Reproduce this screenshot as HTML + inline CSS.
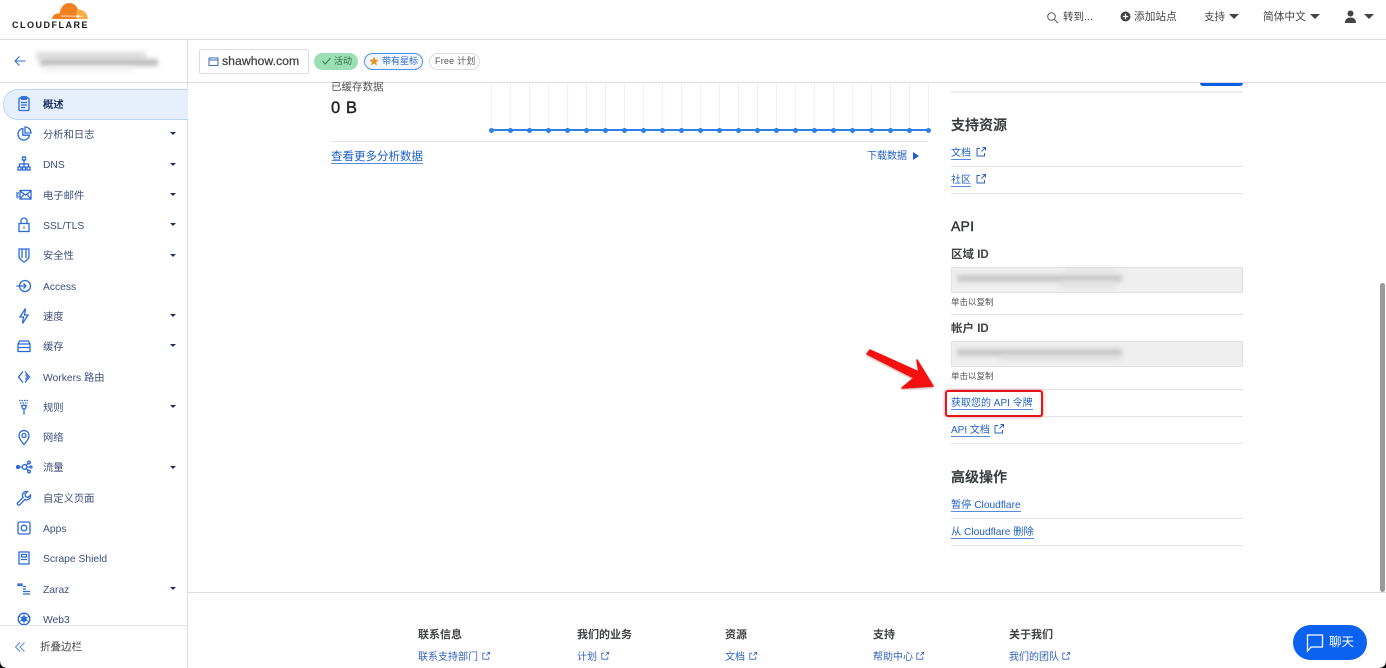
<!DOCTYPE html>
<html lang="zh-CN"><head><meta charset="utf-8"><title>Cloudflare</title>
<style>
html,body{margin:0;padding:0;background:#fff}
#p{position:relative;width:1386px;height:668px;overflow:hidden;background:#fff;font-family:"Liberation Sans","Noto Sans CJK SC",sans-serif;color:#36393a;filter:blur(.35px)}
#p div,#p a,#p svg{position:absolute}
.t{white-space:nowrap;line-height:14px}
.hr{height:1px;background:#e3e3e3}
.s{left:43px;font-size:10.3px;color:#3d4f7c;white-space:nowrap;line-height:14px;margin-top:2px}
.c{left:170px;width:0;height:0;border-left:3.5px solid transparent;border-right:3.5px solid transparent;border-top:3.5px solid #1d3261}
.i{left:15px;width:18px;height:18px;fill:none;stroke:#2c6ad6;stroke-width:1.3}
.l{color:#1f5fc9;font-size:10px;white-space:nowrap;line-height:10px;border-bottom:1px solid #5a8ad8}
.f{color:#2f62c0;font-size:10px;white-space:nowrap;line-height:13px}
.h{font-size:14px;font-weight:500;color:#36393a;white-space:nowrap;line-height:18px;-webkit-text-stroke:.3px #36393a}
.fh{font-size:11px;font-weight:700;color:#404243;white-space:nowrap;line-height:14px}
.x{width:9px;height:9px;fill:none;stroke:#2f62c0;stroke-width:1}
.v{top:84px;width:1px;height:46px;background:#e9f0fb}
.d{top:127.5px;width:5px;height:5px;border-radius:50%;background:#2f7fe8}
.bl{background:#c9c9c9;filter:blur(2.5px)}
</style></head><body><div id="p">

<!-- header -->
<svg style="left:50px;top:1px;width:40px;height:19px" viewBox="0 0 40 19"><path d="M2 18c.3-3 2.500-5.500 5.500-5.500 .8 0 1.300.1 1.800.3C10.500 6.500 14 2 19 2c4.500 0 8.300 3 9 7 .4 2.500.2 6-1 9z" fill="#f38020"/><path d="M27 8.500c5-.7 10.500 3 11 9.500H26z" fill="#fbad41"/><path d="M11 15l22 .2" stroke="#fff" stroke-width=".7"/><path d="M28 12.500l.7 2.300 2.300.5-2.300.5-.7 2.300-.7-2.300-2.300-.5 2.300-.5z" fill="#fff"/></svg>
<div class="t" style="left:12px;top:18px;font-size:9px;font-weight:700;letter-spacing:1.500px;color:#1c1c1c">CLOUDFLARE</div>
<div class="hr" style="left:0;top:39px;width:1386px;background:#dcdcdc"></div>

<svg style="left:1046px;top:11px;width:13px;height:13px" viewBox="0 0 13 13" fill="none" stroke="#555" stroke-width="1"><circle cx="5.500" cy="5.500" r="3.800"/><path d="M8.300 8.300l3.700 3.700"/></svg>
<div class="t" style="left:1063px;top:10px;font-size:10.500px;color:#444">转到...</div>
<svg style="left:1120px;top:11px;width:11px;height:11px" viewBox="0 0 11 11"><circle cx="5.500" cy="5.500" r="5" fill="#444"/><path d="M5.500 2.800v5.400M2.800 5.500h5.400" stroke="#fff" stroke-width="1.200"/></svg>
<div class="t" style="left:1134px;top:10px;font-size:10.700px;color:#444">添加站点</div>
<div class="t" style="left:1204px;top:10px;font-size:10.500px;color:#444">支持</div>
<div style="left:1229px;top:14px;width:0;height:0;border-left:5px solid transparent;border-right:5px solid transparent;border-top:5px solid #444"></div>
<div class="t" style="left:1263px;top:10px;font-size:10.700px;color:#444">简体中文</div>
<div style="left:1310px;top:14px;width:0;height:0;border-left:5px solid transparent;border-right:5px solid transparent;border-top:5px solid #444"></div>
<svg style="left:1344px;top:10px;width:13px;height:13px" viewBox="0 0 13 13" fill="#444"><circle cx="6.500" cy="3.500" r="3"/><path d="M1 13c0-4 2.500-5.500 5.500-5.500S12 9 12 13z"/></svg>
<div style="left:1364px;top:14px;width:0;height:0;border-left:5px solid transparent;border-right:5px solid transparent;border-top:5px solid #444"></div>

<!-- subheader -->
<div class="hr" style="left:0;top:82px;width:1386px;background:#dcdcdc"></div>
<div style="left:187px;top:39px;width:1px;height:629px;background:#dedede"></div>
<svg style="left:13px;top:54px;width:14px;height:14px" viewBox="0 0 14 14" fill="none" stroke="#2c6ad6" stroke-width="1.100"><path d="M12.500 7H2M6.500 2.500L2 7l4.500 4.500"/></svg>
<div class="bl" style="left:36px;top:52px;width:110px;height:7px;background:#dcdcdc"></div>
<div class="bl" style="left:40px;top:59px;width:118px;height:7px;background:#bdbdbd"></div>
<div class="bl" style="left:44px;top:67px;width:90px;height:4px;background:#eee"></div>

<div style="left:199px;top:49px;width:108px;height:23px;border:1px solid #dcdcdc;border-radius:2px"></div>
<svg style="left:208px;top:56px;width:11px;height:11px" viewBox="0 0 11 11" fill="none" stroke="#3f6db8" stroke-width="1"><rect x="1" y="2" width="9" height="7.500"/><path d="M1 4h9"/></svg>
<div class="t" style="left:222px;top:54px;font-size:12.300px;color:#444;-webkit-text-stroke:.25px #444">shawhow.com</div>
<div style="left:314px;top:53px;width:44px;height:17px;border-radius:9px;background:#9be0b4"></div>
<svg style="left:321px;top:56px;width:11px;height:10px" viewBox="0 0 11 10" fill="none" stroke="#3a7a55" stroke-width="1"><path d="M1.500 5l2.800 3L9.500 2"/></svg>
<div class="t" style="left:334px;top:54px;font-size:9px;color:#2f6a48">活动</div>
<div style="left:364px;top:53px;width:57px;height:15px;border-radius:9px;background:#f1f6fe;border:1px solid #4f8ff0"></div>
<svg style="left:369px;top:56px;width:10px;height:10px" viewBox="0 0 10 10"><path d="M5 .5l1.400 3 3.200.4-2.400 2.200.7 3.300L5 7.700 2.100 9.400l.7-3.300L.4 3.900l3.200-.4z" fill="#e8952a"/></svg>
<div class="t" style="left:382px;top:54px;font-size:9px;color:#2f6ac8">带有星标</div>
<div style="left:429px;top:53px;width:49px;height:15px;border-radius:9px;border:1px solid #dcdcdc"></div>
<div class="t" style="left:435px;top:54px;font-size:9px;color:#555;letter-spacing:.2px">Free 计划</div>

<!-- sidebar -->
<div style="left:3px;top:89px;width:184px;height:29px;background:#e6f0fd;border:1px solid #bcd7f8;border-right:0;border-radius:15px 0 0 15px"></div>
<svg class="i" style="top:95px" viewBox="0 0 18 18"><rect x="4" y="3" width="10" height="12.500" rx="1"/><path d="M6.500 1.800h5v2.400h-5zM6 7.500h6M6 10h6M6 12.500h4"/></svg>
<div class="s" style="top:97px;color:#1d3261;font-weight:700">概述</div>

<svg class="i" style="top:125px" viewBox="0 0 18 18"><path d="M7.800 3.500a5.800 5.800 0 1 0 6.700 6.700H7.800zM10 2a6 6 0 0 1 6 6h-6z"/></svg>
<div class="s" style="top:127px">分析和日志</div><div class="c" style="top:132px"></div>
<svg class="i" style="top:155px" viewBox="0 0 18 18"><rect x="7.500" y="2" width="3" height="3"/><rect x="3" y="12" width="3" height="3"/><rect x="7.500" y="12" width="3" height="3"/><rect x="12" y="12" width="3" height="3"/><path d="M9 5v7M4.500 12V9h9v3"/></svg>
<div class="s" style="top:157px">DNS</div><div class="c" style="top:163px"></div>
<svg class="i" style="top:186px" viewBox="0 0 18 18"><rect x="5" y="4.500" width="11" height="8.500"/><path d="M5 5l5.500 4L16 5M5 13l4-4.500M16 13l-4-4.500M1 7h3M1 9h2.500M1 11h3"/></svg>
<div class="s" style="top:188px">电子邮件</div><div class="c" style="top:193px"></div>
<svg class="i" style="top:216px" viewBox="0 0 18 18"><rect x="4" y="7.500" width="10" height="8"/><path d="M6 7.500V5a3 3 0 0 1 6 0v2.500M9 10.500v2"/></svg>
<div class="s" style="top:218px">SSL/TLS</div><div class="c" style="top:223px"></div>
<svg class="i" style="top:246px" viewBox="0 0 18 18"><path d="M4 3h10v7c0 3-2.500 4.500-5 6-2.500-1.500-5-3-5-6zM7 3v9M11 3v9"/></svg>
<div class="s" style="top:248px">安全性</div><div class="c" style="top:254px"></div>
<svg class="i" style="top:277px" viewBox="0 0 18 18"><circle cx="10" cy="9" r="5.500"/><path d="M1.500 9H11M8.500 6.500L11 9l-2.500 2.500"/></svg>
<div class="s" style="top:279px">Access</div>
<svg class="i" style="top:307px" viewBox="0 0 18 18"><path d="M10.500 1.500L5 10h3.500l-1 6.500L13 8H9.500z"/></svg>
<div class="s" style="top:309px">速度</div><div class="c" style="top:314px"></div>
<svg class="i" style="top:337px" viewBox="0 0 18 18"><path d="M3 7l1.500-3h9L15 7v7.500H3zM3 7h12M3 10.500h12"/></svg>
<div class="s" style="top:339px">缓存</div><div class="c" style="top:344px"></div>
<svg class="i" style="top:368px" viewBox="0 0 18 18"><path d="M8 3.500L3.500 9 8 14.500M10 3.500L14.500 9 10 14.500M10.500 6.500L12.500 9l-2 2.500"/></svg>
<div class="s" style="top:370px">Workers 路由</div>
<svg class="i" style="top:398px" viewBox="0 0 18 18"><path d="M4 2.500h10M5 5h8M6 7.500h6" stroke-dasharray="1.500 1"/><circle cx="9" cy="9" r="2"/><path d="M9 11v5.500"/></svg>
<div class="s" style="top:400px">规则</div><div class="c" style="top:405px"></div>
<svg class="i" style="top:428px" viewBox="0 0 18 18"><path d="M9 16.500C6 13 4 10.500 4 7.500a5 5 0 0 1 10 0c0 3-2 5.500-5 9z"/><circle cx="9" cy="7.500" r="2"/></svg>
<div class="s" style="top:430px">网络</div>
<svg class="i" style="top:458px" viewBox="0 0 18 18"><circle cx="3" cy="9" r="1.500" fill="#2c6ad6"/><circle cx="9.500" cy="9" r="2.300"/><circle cx="14" cy="4.500" r="1.300"/><circle cx="14" cy="13.500" r="1.300"/><circle cx="16" cy="9" r="1"/><path d="M4.500 9h2.700M11 7.500l2-2M11 10.500l2 2M12 9h3"/></svg>
<div class="s" style="top:460px">流量</div><div class="c" style="top:466px"></div>
<svg class="i" style="top:489px" viewBox="0 0 18 18"><path d="M11 2.500a4 4 0 0 0-3 6L2.500 14a1.500 1.500 0 0 0 2 2L10 10.500a4 4 0 0 0 5.500-4.500L13 8.500l-2.500-1L10 5l2.500-2.500z"/></svg>
<div class="s" style="top:491px">自定义页面</div>
<svg class="i" style="top:519px" viewBox="0 0 18 18"><rect x="3" y="3" width="12" height="12" rx="1.500"/><circle cx="9" cy="9" r="2.800"/></svg>
<div class="s" style="top:521px">Apps</div>
<svg class="i" style="top:549px" viewBox="0 0 18 18"><path d="M4 3h10v12H4zM6.500 5.500h5v2.500h-5zM6 10.500h6"/></svg>
<div class="s" style="top:551px">Scrape Shield</div>
<svg class="i" style="top:580px" viewBox="0 0 18 18"><path d="M3 4h4v1.500H3z" fill="#8fb2e8"/><path d="M8 6.500h3M8 9h3M8 11.500h7M8 14h7"/></svg>
<div class="s" style="top:582px">Zaraz</div><div class="c" style="top:587px"></div>
<svg class="i" style="top:610px" viewBox="0 0 18 18"><circle cx="9" cy="9" r="5.800"/><circle cx="9" cy="9" r="2.200" fill="#2c6ad6"/><path d="M9 3v12M3.500 6l11 6M14.500 6l-11 6" stroke-width=".8"/></svg>
<div class="s" style="top:612px">Web3</div>
<div style="left:0;top:625px;width:187px;height:43px;background:#fff"></div>
<div class="hr" style="left:0;top:625px;width:187px"></div>
<svg style="left:14px;top:641px;width:12px;height:12px" viewBox="0 0 12 12" fill="none" stroke="#5c86d0" stroke-width="1"><path d="M6 1.500L1.500 6 6 10.500M10.500 1.500L6 6l4.500 4.500"/></svg>
<div class="t" style="left:40px;top:640px;font-size:10.500px;color:#444">折叠边栏</div>

<!-- main: analytics -->
<div class="t" style="left:331px;top:80px;font-size:10.500px;color:#555">已缓存数据</div>
<div class="t" style="left:331px;top:101px;font-size:16.500px;font-weight:500;color:#222;letter-spacing:.6px;-webkit-text-stroke:.4px #222">0 B</div>
<div class="v" style="left:491px"></div><div class="v" style="left:510px"></div><div class="v" style="left:529px"></div><div class="v" style="left:548px"></div><div class="v" style="left:567px"></div><div class="v" style="left:586px"></div><div class="v" style="left:605px"></div><div class="v" style="left:624px"></div><div class="v" style="left:643px"></div><div class="v" style="left:662px"></div><div class="v" style="left:681px"></div><div class="v" style="left:700px"></div><div class="v" style="left:719px"></div><div class="v" style="left:738px"></div><div class="v" style="left:757px"></div><div class="v" style="left:776px"></div><div class="v" style="left:795px"></div><div class="v" style="left:814px"></div><div class="v" style="left:833px"></div><div class="v" style="left:852px"></div><div class="v" style="left:871px"></div><div class="v" style="left:890px"></div><div class="v" style="left:909px"></div><div class="v" style="left:928px"></div>
<div style="left:491px;top:129px;width:438px;height:2px;background:#2f7fe8"></div>
<div class="d" style="left:489px"></div><div class="d" style="left:508px"></div><div class="d" style="left:527px"></div><div class="d" style="left:546px"></div><div class="d" style="left:565px"></div><div class="d" style="left:584px"></div><div class="d" style="left:603px"></div><div class="d" style="left:622px"></div><div class="d" style="left:641px"></div><div class="d" style="left:660px"></div><div class="d" style="left:679px"></div><div class="d" style="left:698px"></div><div class="d" style="left:717px"></div><div class="d" style="left:736px"></div><div class="d" style="left:755px"></div><div class="d" style="left:774px"></div><div class="d" style="left:793px"></div><div class="d" style="left:812px"></div><div class="d" style="left:831px"></div><div class="d" style="left:850px"></div><div class="d" style="left:869px"></div><div class="d" style="left:888px"></div><div class="d" style="left:907px"></div><div class="d" style="left:926px"></div>
<div class="hr" style="left:331px;top:141px;width:597px"></div>
<div class="l" style="left:331px;top:152px;font-size:11.500px;line-height:11px">查看更多分析数据</div>
<div class="t" style="left:867px;top:150px;font-size:10px;color:#1f5fc9">下载数据</div>
<div style="left:913px;top:152px;width:0;height:0;border-top:4.500px solid transparent;border-bottom:4.500px solid transparent;border-left:6px solid #1f5fc9"></div>

<!-- right column -->
<div style="left:1200px;top:83px;width:43px;height:3px;background:#0b5fe8;border-radius:0 0 3px 3px"></div>
<div class="hr" style="left:951px;top:91px;width:292px;height:2px;background:#eee"></div>
<div class="h" style="left:951px;top:116px">支持资源</div>
<div class="l" style="left:951px;top:149px">文档</div>
<svg class="x" style="left:976px;top:147px;width:10px;height:10px" viewBox="0 0 10 10"><path d="M4 1.500H1v7.500h7.500V6M5.500 4.500L9.500.5M6.500.5h3v3"/></svg>
<div class="hr" style="left:951px;top:166px;width:292px"></div>
<div class="l" style="left:951px;top:176px">社区</div>
<svg class="x" style="left:976px;top:174px;width:10px;height:10px" viewBox="0 0 10 10"><path d="M4 1.500H1v7.500h7.500V6M5.500 4.500L9.500.5M6.500.5h3v3"/></svg>
<div class="hr" style="left:951px;top:193px;width:292px"></div>

<div class="h" style="left:951px;top:217px;letter-spacing:.2px;-webkit-text-stroke:.45px #36393a">API</div>
<div class="t" style="left:951px;top:248px;font-size:11.500px;font-weight:700;color:#404243">区域 ID</div>
<div style="left:951px;top:267px;width:290px;height:24px;background:#efefef;border:1px solid #e0e0e0;border-radius:1px"></div>
<div class="bl" style="left:957px;top:275px;width:165px;height:7px;background:#c8c8c8"></div>
<div class="bl" style="left:1065px;top:268px;width:50px;height:4px;background:#e3e3e3"></div>
<div class="bl" style="left:1060px;top:282px;width:55px;height:5px;background:#e0e0e0"></div>
<div class="t" style="left:951px;top:295px;font-size:8.500px;color:#555">单击以复制</div>
<div class="hr" style="left:951px;top:314px;width:292px"></div>

<div class="t" style="left:951px;top:322px;font-size:11.500px;font-weight:700;color:#404243">帐户 ID</div>
<div style="left:951px;top:341px;width:290px;height:24px;background:#efefef;border:1px solid #e0e0e0;border-radius:1px"></div>
<div class="bl" style="left:957px;top:349px;width:165px;height:7px;background:#c6c6c6"></div>
<div class="bl" style="left:1000px;top:356px;width:120px;height:4px;background:#dedede"></div>
<div class="t" style="left:951px;top:369px;font-size:8.500px;color:#555">单击以复制</div>
<div class="hr" style="left:951px;top:389px;width:292px"></div>

<div class="hr" style="left:951px;top:416px;width:292px"></div>
<div style="left:945px;top:390px;width:94px;height:23px;border:2px solid #e3141b;border-radius:3px;box-shadow:0 0 3px rgba(180,30,30,.5)"></div>
<div class="l" style="left:951px;top:399px">获取您的 API 令牌</div>
<div class="l" style="left:951px;top:426px">API 文档</div>
<svg class="x" style="left:994px;top:424px;width:10px;height:10px" viewBox="0 0 10 10"><path d="M4 1.500H1v7.500h7.500V6M5.500 4.500L9.500.5M6.500.5h3v3"/></svg>
<div class="hr" style="left:951px;top:443px;width:292px"></div>

<div class="h" style="left:951px;top:468px">高级操作</div>
<div class="l" style="left:951px;top:501px;font-size:10.200px">暂停 Cloudflare</div>
<div class="hr" style="left:951px;top:518px;width:292px"></div>
<div class="l" style="left:951px;top:528px;font-size:10.200px">从 Cloudflare 删除</div>
<div class="hr" style="left:951px;top:545px;width:292px"></div>

<!-- red arrow -->
<svg style="left:860px;top:345px;width:80px;height:45px" viewBox="0 0 80 45"><path d="M10 5L59 27 57 15 73 41 42 43 54 33 7 9z" fill="#f4100f" stroke="#f4100f" stroke-width="1.500" stroke-linejoin="round" style="filter:drop-shadow(0 1px 1px rgba(120,0,0,.4))"/></svg>

<!-- footer -->
<div class="hr" style="left:188px;top:592px;width:1198px;background:#dedede"></div>
<div class="fh" style="left:418px;top:628px">联系信息</div>
<div class="f" style="left:418px;top:651px">联系支持部门</div><svg class="x" style="left:482px;top:652px;width:8px;height:8px" viewBox="0 0 10 10"><path d="M4 1.500H1v7.500h7.500V6M5.500 4.500L9.500.5M6.500.5h3v3"/></svg>
<div class="fh" style="left:577px;top:628px">我们的业务</div>
<div class="f" style="left:577px;top:651px">计划</div><svg class="x" style="left:601px;top:652px;width:8px;height:8px" viewBox="0 0 10 10"><path d="M4 1.500H1v7.500h7.500V6M5.500 4.500L9.500.5M6.500.5h3v3"/></svg>
<div class="fh" style="left:725px;top:628px">资源</div>
<div class="f" style="left:725px;top:651px">文档</div><svg class="x" style="left:749px;top:652px;width:8px;height:8px" viewBox="0 0 10 10"><path d="M4 1.500H1v7.500h7.500V6M5.500 4.500L9.500.5M6.500.5h3v3"/></svg>
<div class="fh" style="left:873px;top:628px">支持</div>
<div class="f" style="left:873px;top:651px">帮助中心</div><svg class="x" style="left:916px;top:652px;width:8px;height:8px" viewBox="0 0 10 10"><path d="M4 1.500H1v7.500h7.500V6M5.500 4.500L9.500.5M6.500.5h3v3"/></svg>
<div class="fh" style="left:1009px;top:628px">关于我们</div>
<div class="f" style="left:1009px;top:651px">我们的团队</div><svg class="x" style="left:1062px;top:652px;width:8px;height:8px" viewBox="0 0 10 10"><path d="M4 1.500H1v7.500h7.500V6M5.500 4.500L9.500.5M6.500.5h3v3"/></svg>

<!-- chat -->
<div style="left:1293px;top:625px;width:74px;height:35px;border-radius:18px;background:#0b62f0"></div>
<svg style="left:1305px;top:633px;width:20px;height:20px" viewBox="0 0 20 20" fill="none" stroke="#fff" stroke-width="1.300"><path d="M2.500 2h15v12H6l-3.500 4z"/></svg>
<div class="t" style="left:1329px;top:635px;font-size:12.500px;color:#fff">聊天</div>

<!-- scrollbar -->
<div style="left:1380px;top:283px;width:5px;height:309px;border-radius:3px;background:#9a9a9a"></div>

<!-- window corners -->
<svg style="left:0;top:660px;width:8px;height:8px" viewBox="0 0 8 8"><path d="M0 0Q0 8 8 8H0z" fill="#111"/></svg>
<svg style="left:1378px;top:660px;width:8px;height:8px" viewBox="0 0 8 8"><path d="M8 0Q8 8 0 8H8z" fill="#111"/></svg>
</div></body></html>
